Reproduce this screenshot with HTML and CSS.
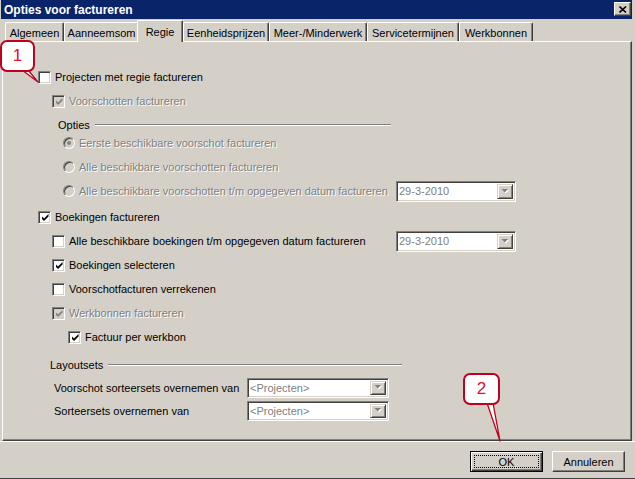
FILE: index.html
```html
<!DOCTYPE html>
<html>
<head>
<meta charset="utf-8">
<title>Opties voor factureren</title>
<link rel="stylesheet" href="styles.css">
</head>
<body>
<div class="window">
  <div class="titlebar">
    <span class="title">Opties voor factureren</span>
    <span class="close"><svg width="8" height="7" viewBox="0 0 8 7"><path d="M0.5 0.5 L7 6.5 M7 0.5 L0.5 6.5" stroke="#000" stroke-width="1.6" fill="none"/></svg></span>
  </div>

  <div class="tabs">
    <div class="tab w-alg">Algemeen</div>
    <div class="tab w-aan">Aanneemsom</div>
    <div class="tab sel w-reg">Regie</div>
    <div class="tab w-een">Eenheidsprijzen</div>
    <div class="tab w-meer">Meer-/Minderwerk</div>
    <div class="tab w-serv">Servicetermijnen</div>
    <div class="tab w-werk">Werkbonnen</div>
  </div>

  <div class="panel">
    <div class="row ind1">
      <span class="cb"></span><span class="lbl">Projecten met regie factureren</span>
    </div>
    <div class="row ind2 dis">
      <span class="cb"><svg width="9" height="9" viewBox="0 0 9 9"><polygon points="1,3.5 3,5.5 7.5,1 7.5,3.5 3,8 1,6" fill="#808080"/></svg></span><span class="lbl">Voorschotten factureren</span>
    </div>

    <div class="group-head g-opties"><span>Opties</span><i class="etch"></i></div>
    <div class="row ind-rb dis">
      <span class="rb on"></span><span class="lbl">Eerste beschikbare voorschot factureren</span>
    </div>
    <div class="row ind-rb dis">
      <span class="rb"></span><span class="lbl">Alle beschikbare voorschotten factureren</span>
    </div>
    <div class="row ind-rb dis has-combo">
      <span class="rb"></span><span class="lbl">Alle beschikbare voorschotten t/m opgegeven datum factureren</span>
      <span class="combo date"><span class="val">29-3-2010</span><span class="arrow"><svg width="8" height="5" viewBox="0 0 8 5"><polygon points="1.5,1 8,1 4.75,4.5" fill="#fff"/><polygon points="0.5,0 7,0 3.75,3.5" fill="#808080"/></svg></span></span>
    </div>

    <div class="section">
      <div class="row ind1">
        <span class="cb"><svg width="9" height="9" viewBox="0 0 9 9"><polygon points="1,3.5 3,5.5 7.5,1 7.5,3.5 3,8 1,6" fill="#000"/></svg></span><span class="lbl">Boekingen factureren</span>
      </div>
      <div class="row ind2 has-combo">
        <span class="cb"></span><span class="lbl">Alle beschikbare boekingen t/m opgegeven datum factureren</span>
        <span class="combo date"><span class="val">29-3-2010</span><span class="arrow"><svg width="8" height="5" viewBox="0 0 8 5"><polygon points="1.5,1 8,1 4.75,4.5" fill="#fff"/><polygon points="0.5,0 7,0 3.75,3.5" fill="#808080"/></svg></span></span>
      </div>
      <div class="row ind2">
        <span class="cb"><svg width="9" height="9" viewBox="0 0 9 9"><polygon points="1,3.5 3,5.5 7.5,1 7.5,3.5 3,8 1,6" fill="#000"/></svg></span><span class="lbl">Boekingen selecteren</span>
      </div>
      <div class="row ind2">
        <span class="cb"></span><span class="lbl">Voorschotfacturen verrekenen</span>
      </div>
      <div class="row ind2 dis">
        <span class="cb"><svg width="9" height="9" viewBox="0 0 9 9"><polygon points="1,3.5 3,5.5 7.5,1 7.5,3.5 3,8 1,6" fill="#808080"/></svg></span><span class="lbl">Werkbonnen factureren</span>
      </div>
      <div class="row ind3">
        <span class="cb"><svg width="9" height="9" viewBox="0 0 9 9"><polygon points="1,3.5 3,5.5 7.5,1 7.5,3.5 3,8 1,6" fill="#000"/></svg></span><span class="lbl">Factuur per werkbon</span>
      </div>
    </div>

    <div class="group-head g-layout"><span>Layoutsets</span><i class="etch"></i></div>
    <div class="lrow">
      <span class="lbl">Voorschot sorteersets overnemen van</span>
      <span class="combo proj"><span class="val">&lt;Projecten&gt;</span><span class="arrow"><svg width="8" height="5" viewBox="0 0 8 5"><polygon points="1.5,1 8,1 4.75,4.5" fill="#fff"/><polygon points="0.5,0 7,0 3.75,3.5" fill="#808080"/></svg></span></span>
    </div>
    <div class="lrow">
      <span class="lbl">Sorteersets overnemen van</span>
      <span class="combo proj"><span class="val">&lt;Projecten&gt;</span><span class="arrow"><svg width="8" height="5" viewBox="0 0 8 5"><polygon points="1.5,1 8,1 4.75,4.5" fill="#fff"/><polygon points="0.5,0 7,0 3.75,3.5" fill="#808080"/></svg></span></span>
    </div>
  </div>

  <div class="footer">
    <button class="btn default">OK</button>
    <button class="btn">Annuleren</button>
  </div>

  <svg class="tails" width="635" height="479" viewBox="0 0 635 479">
    <polygon points="22,70 28,70 38,82" fill="#fff" stroke="#c0001c" stroke-width="1.3" stroke-linejoin="round"/>
    <polygon points="487,403 493,403 500,441" fill="#fff" stroke="#c0001c" stroke-width="1.3" stroke-linejoin="round"/>
  </svg>
  <div class="callout c1">1</div>
  <div class="callout c2">2</div>
</div>
</body>
</html>
```

FILE: styles.css
```css
* { box-sizing: border-box; }
html, body { margin: 0; padding: 0; }
body {
  background: #d4d0c8;
  font-family: "Liberation Sans", Arial, sans-serif;
  font-size: 11px;
  color: #000;
  width: 635px;
  height: 479px;
  overflow: hidden;
}

.window {
  position: relative;
  width: 635px;
  height: 479px;
  display: flex;
  flex-direction: column;
  border-bottom: 1px solid #404040;
}

/* title bar */
.titlebar {
  height: 19px;
  flex: none;
  margin: 0 3px 0 1px;
  background: #0a246a;
  display: flex;
  align-items: flex-start;
}
.title {
  color: #fff;
  font-weight: bold;
  font-size: 12px;
  line-height: 15px;
  padding: 3px 0 0 3px;
  white-space: nowrap;
}
.close {
  margin: 2px 1px 0 auto;
  width: 17px;
  height: 14px;
  background: #d4d0c8;
  border: 1px solid;
  border-color: #fff #404040 #404040 #fff;
  box-shadow: inset -1px -1px #808080;
  display: flex;
  align-items: center;
  justify-content: center;
}
.close svg { display: block; }

/* tabs */
.tabs {
  flex: none;
  height: 22px;
  display: flex;
  align-items: flex-end;
  padding-left: 5px;
}
.tab {
  height: 19px;
  border-top: 1px solid #fff;
  border-left: 1px solid #fff;
  border-right: 1px solid #404040;
  border-top-left-radius: 2px;
  border-top-right-radius: 2px;
  box-shadow: inset -1px 0 #808080;
  display: flex;
  align-items: center;
  justify-content: center;
  padding-top: 2px;
  white-space: nowrap;
  flex: none;
}
.tab.sel {
  height: 22px;
  margin-bottom: -1px;
  margin-left: -2px;
  padding-top: 0;
  background: #d4d0c8;
  position: relative;
  z-index: 1;
}
.w-alg { width: 59px; }
.w-aan { width: 75px; }
.w-reg { width: 46px; }
.w-een { width: 86px; }
.w-meer { width: 98px; }
.w-serv { width: 92px; }
.w-werk { width: 74px; }

/* panel */
.panel {
  flex: none;
  height: 400px;
  margin: 0 3px 0 2px;
  border-top: 1px solid #fff;
  border-left: 1px solid #fff;
  border-right: 1px solid #404040;
  border-bottom: 1px solid #404040;
  box-shadow: inset -1px -1px #808080;
  padding-top: 23px;
  display: flex;
  flex-direction: column;
}

.row {
  height: 24px;
  display: flex;
  align-items: center;
  white-space: nowrap;
  flex: none;
}
.ind1 { padding-left: 35px; }
.ind2 { padding-left: 49px; }
.ind3 { padding-left: 65px; }
.ind-rb { padding-left: 60px; }
.has-combo { padding-right: 115px; }

.lbl { padding-left: 4px; }
.dis .lbl {
  color: #808080;
  text-shadow: 1px 1px 0 #fff;
}

.cb {
  flex: none;
  width: 13px;
  height: 13px;
  border: 1px solid;
  border-color: #808080 #fff #fff #808080;
  box-shadow: inset 1px 1px #404040, inset -1px -1px #d4d0c8;
  background: #fff;
  display: flex;
  align-items: center;
  justify-content: center;
  padding: 1px 0 0 1px;
}
.cb svg { display: block; }
.dis .cb { background: #d4d0c8; }

.rb {
  flex: none;
  position: relative;
  width: 12px;
  height: 12px;
  border-radius: 50%;
  border: 1px solid;
  border-color: #808080 #fff #fff #808080;
  box-shadow: inset 1px 1px #404040, inset -1px -1px #d4d0c8;
  background: #d4d0c8;
}
.rb.on::after {
  content: "";
  position: absolute;
  left: 3px;
  top: 3px;
  width: 4px;
  height: 4px;
  border-radius: 50%;
  background: #808080;
}

.group-head {
  flex: none;
  height: 12px;
  display: flex;
  align-items: center;
  white-space: nowrap;
}
.g-opties { margin-top: 6px; width: 388px; padding-left: 55px; }
.g-layout { margin-top: 10px; margin-bottom: 5px; width: 399px; padding-left: 47px; }
.etch {
  flex: 1;
  height: 2px;
  border-top: 1px solid #808080;
  border-bottom: 1px solid #fff;
  margin-left: 5px;
}

.section { margin-top: 2px; display: flex; flex-direction: column; }

.combo {
  flex: none;
  display: flex;
  align-items: stretch;
  border: 1px solid;
  border-color: #808080 #fff #fff #808080;
  box-shadow: inset 1px 1px #404040, inset -1px -1px #d4d0c8;
  background: #fff;
  padding: 2px;
  color: #808080;
}
.combo.date { width: 120px; height: 21px; margin-left: auto; }
.combo.proj { width: 142px; height: 20px; }
.combo .val { flex: 1; display: flex; align-items: center; padding-left: 0; }
.combo .arrow {
  width: 16px;
  background: #d4d0c8;
  border: 1px solid;
  border-color: #d4d0c8 #404040 #404040 #d4d0c8;
  box-shadow: inset 1px 1px #fff, inset -1px -1px #808080;
  display: flex;
  align-items: center;
  justify-content: center;
}
.combo .arrow svg { display: block; }

.lrow {
  flex: none;
  height: 23px;
  display: grid;
  grid-template-columns: 193px 142px;
  align-items: center;
  padding-left: 51px;
  white-space: nowrap;
}
.lrow .lbl { padding-left: 0; }

/* footer */
.footer {
  flex: 1;
  border-top: 1px solid #fff;
  display: flex;
  justify-content: flex-end;
  align-items: flex-start;
  gap: 9px;
  padding: 9px 10px 0 0;
}
.btn {
  width: 73px;
  height: 21px;
  font-family: inherit;
  font-size: 11px;
  color: #000;
  background: #d4d0c8;
  border: 1px solid;
  border-color: #fff #404040 #404040 #fff;
  box-shadow: inset -1px -1px #808080;
  padding: 0;
  margin: 0;
}
.btn.default {
  border: 1px solid #000;
  box-shadow: inset 1px 1px #fff, inset -1px -1px #404040, inset -2px -2px #808080;
  outline: 1px dotted #000;
  outline-offset: -5px;
}

/* callouts */
.tails {
  position: absolute;
  left: 0;
  top: 0;
  pointer-events: none;
}
.callout {
  position: absolute;
  background: #fff;
  border: 2px solid #c0001c;
  border-radius: 7px;
  color: #e0102e;
  font-size: 17px;
  display: flex;
  align-items: center;
  justify-content: center;
}
.c1 { left: 0; top: 40px; width: 35px; height: 32px; }
.c2 { left: 463px; top: 373px; width: 37px; height: 32px; }
```
